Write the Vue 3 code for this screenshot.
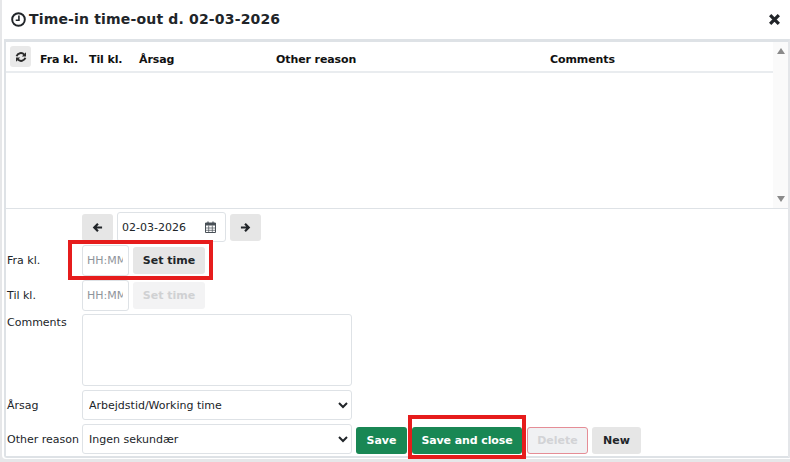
<script setup>
const columns = [
  { label: 'Fra kl.', cls: 'c1' },
  { label: 'Til kl.', cls: 'c2' },
  { label: 'Årsag', cls: 'c3' },
  { label: 'Other reason', cls: 'c4' },
  { label: 'Comments', cls: 'c5' },
]
</script>

<template>
  <div class="dialog">
    <div class="sheet">
      <header class="title-bar">
        <h1 class="title">
          <svg class="clock" viewBox="0 0 14 14" width="15" height="15">
            <circle cx="7" cy="7" r="5.9" fill="none" stroke="#212529" stroke-width="1.8" />
            <path d="M7.4 3.2V7.7H4.4" fill="none" stroke="#212529" stroke-width="1.5" />
          </svg>
          <span>Time-in time-out d. 02-03-2026</span>
        </h1>
        <svg class="close" viewBox="0 0 12 12" width="13" height="13">
          <path d="M2 2L10 10M10 2L2 10" stroke="#212529" stroke-width="3" />
        </svg>
      </header>

      <section class="panel">
        <div class="table-area">
          <div class="table-main">
            <div class="thead">
              <button class="refresh" type="button">
                <svg viewBox="0 0 12 12" width="12" height="12">
                  <path d="M1.6 5.2A4.5 4.5 0 0 1 9.2 3.6M10.4 6.8A4.5 4.5 0 0 1 2.8 8.4" fill="none" stroke="#2b2b2b" stroke-width="2" />
                  <path d="M11 1.2V5.4H6.8ZM1 10.8V6.6H5.2Z" fill="#2b2b2b" />
                </svg>
              </button>
              <span v-for="c in columns" :key="c.label" :class="['th', c.cls]">{{ c.label }}</span>
            </div>
          </div>
          <div class="scrollbar">
            <span class="arrow up"></span>
            <span class="arrow down"></span>
          </div>
        </div>

        <form class="form" @submit.prevent>
          <div class="row nav-row">
            <button class="btn grey nav" type="button">
              <svg viewBox="0 0 12 12" width="11" height="11"><path d="M11 6H3M6.5 2L2.5 6L6.5 10" fill="none" stroke="#212529" stroke-width="2.4" /></svg>
            </button>
            <div class="date">
              <span>02-03-2026</span>
              <svg viewBox="0 0 11 12" width="11" height="12">
                <path d="M.5 2h10v9.5H.5z" fill="none" stroke="#495057" />
                <path d="M.5 2h10v2.5H.5z" fill="#495057" />
                <path d="M3.7 4.5v7M7.3 4.5v7M.5 7h10M.5 9.3h10" stroke="#495057" stroke-width=".7" />
                <path d="M3 .5v2M8 .5v2" stroke="#495057" stroke-width="1.2" />
              </svg>
            </div>
            <button class="btn grey nav" type="button">
              <svg viewBox="0 0 12 12" width="11" height="11"><path d="M1 6H9M5.5 2L9.5 6L5.5 10" fill="none" stroke="#212529" stroke-width="2.4" /></svg>
            </button>
          </div>

          <div class="row time-row">
            <span class="label">Fra kl.</span>
            <input class="time" placeholder="HH:MM" />
            <button class="btn grey set" type="button">Set time</button>
          </div>

          <div class="row time-row second">
            <span class="label">Til kl.</span>
            <input class="time" placeholder="HH:MM" />
            <button class="btn set disabled" type="button">Set time</button>
          </div>

          <div class="row top comments-row">
            <span class="label">Comments</span>
            <textarea class="area"></textarea>
          </div>

          <div class="row select-row">
            <span class="label">Årsag</span>
            <select class="select"><option>Arbejdstid/Working time</option></select>
          </div>

          <div class="row select-row">
            <span class="label">Other reason</span>
            <select class="select"><option>Ingen sekundær</option></select>
            <div class="actions">
              <button class="btn green save" type="button">Save</button>
              <button class="btn green close-save" type="button">Save and close</button>
              <button class="btn delete" type="button">Delete</button>
              <button class="btn grey new" type="button">New</button>
            </div>
          </div>
        </form>
      </section>
    </div>

    <div class="mark mark-time"></div>
    <div class="mark mark-save"></div>
  </div>
</template>

<style>
html, body { margin: 0; background: #fff; overflow: hidden; }
</style>

<style scoped>
.dialog {
  position: relative;
  width: 790px;
  height: 462px;
  overflow: hidden;
  font-family: "DejaVu Sans", Verdana, sans-serif;
  font-size: 11px;
  color: #212529;
  background: #e6e7e9;
  box-sizing: border-box;
  padding-left: 2px;
}
.sheet {
  height: 459px;
  background: #fff;
  border-bottom-left-radius: 4px;
}
.title-bar {
  height: 39px;
  box-sizing: border-box;
  padding: 0 9px 0 9px;
  display: flex;
  align-items: center;
  justify-content: space-between;
}
.title {
  margin: 0;
  display: flex;
  align-items: center;
  gap: 3px;
  font-size: 14px;
  font-weight: 700;
  line-height: 17px;
  letter-spacing: .17px;
}
.panel {
  margin-left: 2px;
  height: 419px;
  box-sizing: border-box;
  border: solid #dee2e6;
  border-width: 3px 2px 2px 2px;
  border-right-color: #e4e6e9;
  border-bottom-left-radius: 3px;
}
.table-area {
  height: 166px;
  display: flex;
  border-bottom: 1px solid #dee2e6;
  box-sizing: content-box;
}
.table-main { flex: 1; }
.thead {
  height: 29px;
  border-bottom: 2px solid #e9ecef;
  display: flex;
  align-items: center;
  font-weight: 700;
  color: #111;
  padding-left: 4px;
}
.refresh {
  width: 21px;
  height: 21px;
  padding: 0;
  border: 0;
  border-radius: 3px;
  background: #e9e9e9;
  display: flex;
  align-items: center;
  justify-content: center;
}
.th { white-space: nowrap; padding-top: 6px; letter-spacing: -.1px; }
.c1 { margin-left: 9px; width: 49px; }
.c2 { width: 50px; }
.c3 { width: 137px; }
.c4 { width: 274px; }
.scrollbar {
  width: 15px;
  background: #fafafa;
  display: flex;
  flex-direction: column;
  justify-content: space-between;
  align-items: center;
  padding: 6px 0 6px;
  box-sizing: border-box;
}
.arrow { width: 0; height: 0; border-left: 4.5px solid transparent; border-right: 4.5px solid transparent; }
.up { border-bottom: 6px solid #8a8a8a; }
.down { border-top: 6px solid #8a8a8a; }
.form {
  padding: 3px 0 0 1px;
  display: flex;
  flex-direction: column;
}
.row { display: flex; align-items: center; }
.top { align-items: flex-start; }
.label { width: 75px; flex: none; white-space: nowrap; }
.nav-row { height: 30px; gap: 4px; padding-left: 75px; }
.time-row { height: 31px; margin-top: 3px; }
.time-row.second { margin-top: 4px; }
.time-row .time { margin-right: 4px; }
.comments-row { margin-top: 3px; height: 72px; }
.comments-row .label { line-height: 15px; padding-top: 1px; }
.select-row { margin-top: 4px; height: 30px; }
.btn {
  font-family: inherit;
  font-size: 11px;
  font-weight: 700;
  height: 27px;
  border: 0;
  border-radius: 3px;
  padding: 0;
  display: flex;
  align-items: center;
  justify-content: center;
  box-sizing: border-box;
}
.grey { background: #e6e6e6; color: #212529; }
.nav { width: 31px; }
.date {
  width: 109px;
  height: 30px;
  box-sizing: border-box;
  border: 1px solid #dee2e6;
  border-radius: 3px;
  display: flex;
  align-items: center;
  justify-content: space-between;
  padding: 0 9px 0 4px;
  color: #212529;
}
.time {
  width: 47px;
  height: 31px;
  box-sizing: border-box;
  padding: 0 5px 0 4px;
  border: 1px solid #dee2e6;
  border-radius: 3px;
  font-family: inherit;
  font-size: 11px;
  outline: 0;
}
.time::placeholder { color: #8f959b; opacity: 1; }
.set { width: 72px; }
.disabled { background: #f3f3f4; color: #d0d1d3; }
.area {
  width: 270px;
  height: 72px;
  box-sizing: border-box;
  border: 1px solid #dee2e6;
  border-radius: 3px;
  resize: none;
  outline: 0;
}
.select {
  width: 270px;
  height: 30px;
  box-sizing: border-box;
  border: 1px solid #dee2e6;
  border-radius: 3px;
  background: #fff;
  font-family: inherit;
  font-size: 11px;
  color: #212529;
  padding: 0 0 0 2px;
  outline: 0;
}
.actions { display: flex; margin-left: 4px; gap: 5px; margin-top: 3px; }
.green { background: #198754; color: #fff; }
.save { width: 51px; }
.close-save { width: 110px; letter-spacing: -.1px; }
.delete {
  width: 61px;
  background: #f0f1f3;
  color: #d2d3d6;
  border: 1px solid #e58d96;
}
.new { width: 49px; margin-left: -1px; }
.mark { position: absolute; border: 4px solid #e61c1c; box-sizing: border-box; pointer-events: none; }
.mark-time { left: 68px; top: 240px; width: 145px; height: 40px; }
.mark-save { left: 408px; top: 415px; width: 118px; height: 44px; }
</style>
